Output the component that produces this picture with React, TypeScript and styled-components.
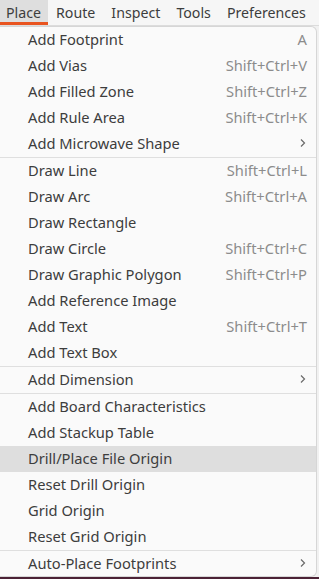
import React from 'react';
import styled, { createGlobalStyle } from 'styled-components';

const GlobalStyle = createGlobalStyle`
  html, body {
    margin: 0;
    padding: 0;
    background: #f1f1f1;
    font-family: "Noto Sans", "DejaVu Sans", sans-serif;
    overflow: hidden;
  }
`;

const Screen = styled.div`
  width: 319px;
  height: 579px;
  display: flex;
  flex-direction: column;
  background: #f1f1f1;
`;

const MenuBar = styled.div`
  height: 26px;
  display: flex;
  align-items: stretch;
  background: #f6f6f6;
  border-bottom: 1px solid #dcdcdc;
  box-sizing: border-box;
`;

const BarItem = styled.div<{ $active?: boolean }>`
  display: flex;
  align-items: center;
  padding: 0 8px 1px;
  font-size: 14.2px;
  color: #3d3d3d;
  white-space: nowrap;
  background: ${(p) => (p.$active ? '#dedede' : 'transparent')};
  box-shadow: ${(p) => (p.$active ? 'inset 0 -3px 0 #e95420' : 'none')};

  &:first-child {
    padding-left: 6px;
    padding-right: 7px;
  }
`;

const Dropdown = styled.div`
  flex: 1;
  margin-right: 2px;
  background: #fafafa;
  border: 1px solid #d6d6d6;
  border-left: none;
  border-radius: 0 6px 6px 0;
  display: flex;
  flex-direction: column;
  overflow: hidden;
`;

const Row = styled.div<{ $hover?: boolean }>`
  height: 26px;
  box-sizing: border-box;
  flex: none;
  display: flex;
  align-items: center;
  padding: 0 9px 2px 28px;
  font-size: 14.7px;
  color: #3d3d3d;
  background: ${(p) => (p.$hover ? '#dedede' : 'transparent')};
`;

const Label = styled.span`
  flex: 1;
  white-space: nowrap;
`;

const Shortcut = styled.span`
  color: #8c8c8c;
  white-space: nowrap;
`;

const Separator = styled.div`
  height: 1px;
  flex: none;
  background: #dfdfdf;
`;

const Desktop = styled.div`
  height: 2px;
  flex: none;
  background: #4b2236;
`;

const Chevron = () => (
  <svg width="8" height="10" viewBox="0 0 8 10" fill="none">
    <path d="M2 1.5 L5.5 5 L2 8.5" stroke="#6a6a6a" strokeWidth="1.2" />
  </svg>
);

type Entry = { label: string; key?: string; sub?: boolean; hover?: boolean } | 'sep';

const entries: Entry[] = [
  { label: 'Add Footprint', key: 'A' },
  { label: 'Add Vias', key: 'Shift+Ctrl+V' },
  { label: 'Add Filled Zone', key: 'Shift+Ctrl+Z' },
  { label: 'Add Rule Area', key: 'Shift+Ctrl+K' },
  { label: 'Add Microwave Shape', sub: true },
  'sep',
  { label: 'Draw Line', key: 'Shift+Ctrl+L' },
  { label: 'Draw Arc', key: 'Shift+Ctrl+A' },
  { label: 'Draw Rectangle' },
  { label: 'Draw Circle', key: 'Shift+Ctrl+C' },
  { label: 'Draw Graphic Polygon', key: 'Shift+Ctrl+P' },
  { label: 'Add Reference Image' },
  { label: 'Add Text', key: 'Shift+Ctrl+T' },
  { label: 'Add Text Box' },
  'sep',
  { label: 'Add Dimension', sub: true },
  'sep',
  { label: 'Add Board Characteristics' },
  { label: 'Add Stackup Table' },
  { label: 'Drill/Place File Origin', hover: true },
  { label: 'Reset Drill Origin' },
  { label: 'Grid Origin' },
  { label: 'Reset Grid Origin' },
  'sep',
  { label: 'Auto-Place Footprints', sub: true },
];

const App: React.FC = () => {
  return (
    <Screen>
      <GlobalStyle />
      <MenuBar>
        <BarItem $active>Place</BarItem>
        <BarItem>Route</BarItem>
        <BarItem>Inspect</BarItem>
        <BarItem>Tools</BarItem>
        <BarItem>Preferences</BarItem>
      </MenuBar>
      <Dropdown>
        {entries.map((e, i) =>
          e === 'sep' ? (
            <Separator key={i} />
          ) : (
            <Row key={i} $hover={e.hover}>
              <Label>{e.label}</Label>
              {e.key && <Shortcut>{e.key}</Shortcut>}
              {e.sub && <Chevron />}
            </Row>
          )
        )}
      </Dropdown>
      <Desktop />
    </Screen>
  );
};

export default App;
